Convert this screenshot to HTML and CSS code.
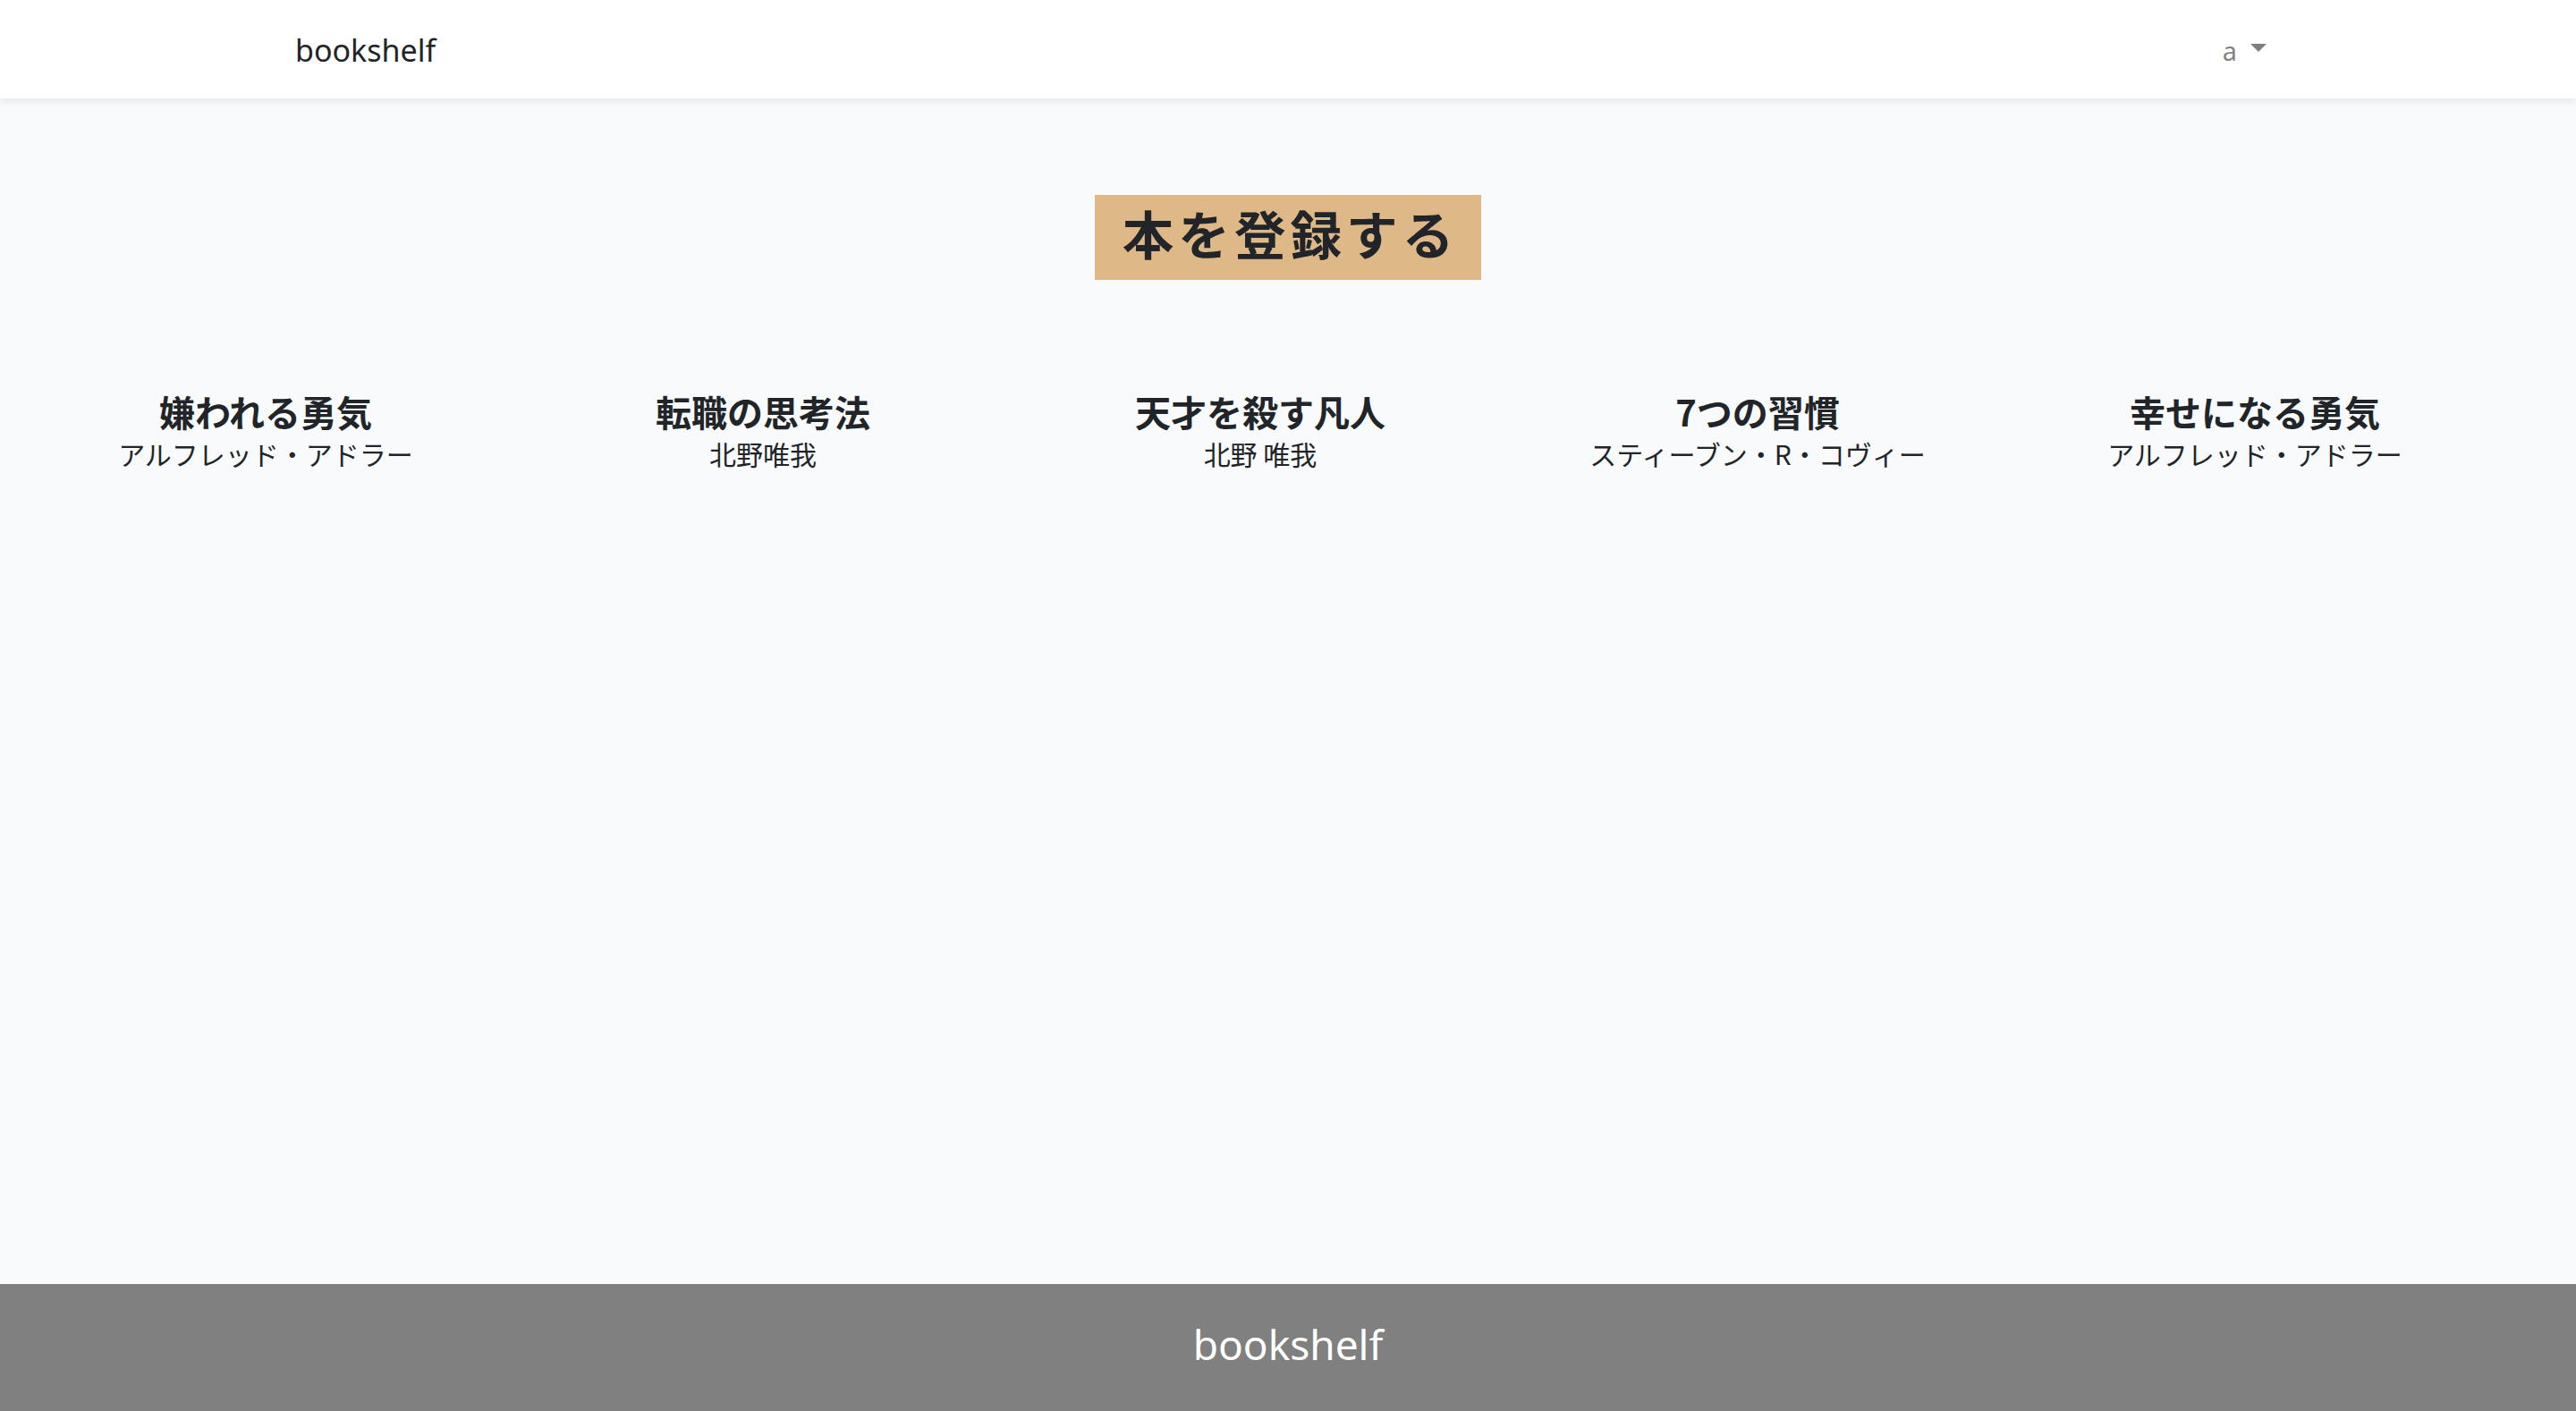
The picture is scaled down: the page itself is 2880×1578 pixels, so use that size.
FILE: index.html
```html
<!DOCTYPE html>
<html lang="ja">
<head>
<meta charset="utf-8">
<title>bookshelf</title>
<link rel="stylesheet" href="styles.css">
</head>
<body>
<div class="app">
  <nav class="navbar">
    <div class="container nav-inner">
      <a class="brand" href="#">bookshelf</a>
      <a class="user-toggle" href="#">a<span class="caret"></span></a>
    </div>
  </nav>
  <main class="main">
    <div class="register-wrap">
      <a class="register" href="#">本を登録する</a>
    </div>
    <div class="books">
      <div class="book">
        <h5 class="book-title">嫌われる勇気</h5>
        <p class="book-author">アルフレッド・アドラー</p>
      </div>
      <div class="book">
        <h5 class="book-title">転職の思考法</h5>
        <p class="book-author">北野唯我</p>
      </div>
      <div class="book">
        <h5 class="book-title">天才を殺す凡人</h5>
        <p class="book-author">北野 唯我</p>
      </div>
      <div class="book">
        <h5 class="book-title">7つの習慣</h5>
        <p class="book-author">スティーブン・R・コヴィー</p>
      </div>
      <div class="book">
        <h5 class="book-title">幸せになる勇気</h5>
        <p class="book-author">アルフレッド・アドラー</p>
      </div>
    </div>
  </main>
  <footer class="footer">
    <span class="footer-brand">bookshelf</span>
  </footer>
</div>
</body>
</html>
```

FILE: styles.css
```css
* { box-sizing: border-box; }
html, body { margin: 0; padding: 0; }
body {
  background: #f8fafc;
  color: #212529;
  font-family: "Noto Sans", "Noto Sans CJK JP", sans-serif;
  font-size: 28.8px;
  line-height: 1.6;
}
a { text-decoration: none; color: inherit; }
.app {
  display: flex;
  flex-direction: column;
  min-height: 100vh;
}
.navbar {
  background: #fff;
  height: 110px;
  box-shadow: 0 4px 8px rgba(0,0,0,0.075);
  position: relative;
  z-index: 1;
}
.container {
  width: 2220px;
  margin: 0 auto;
  height: 100%;
}
.nav-inner {
  display: flex;
  align-items: center;
  justify-content: space-between;
}
.brand {
  font-size: 34px;
  color: #212529;
  padding-top: 2px;
}
.user-toggle {
  color: rgba(0,0,0,0.5);
  font-size: 28.8px;
  padding: 4px 16px 0;
  display: flex;
  align-items: center;
}
.caret {
  display: inline-block;
  width: 0;
  height: 0;
  margin-left: 15px;
  border-top: 9px solid rgba(0,0,0,0.5);
  border-left: 9px solid transparent;
  border-right: 9px solid transparent;
  margin-top: -8px;
}
.main {
  flex: 1;
  padding-top: 108px;
}
.register-wrap {
  display: flex;
  justify-content: center;
}
.register {
  background: #deb887;
  color: #212529;
  font-family: "Noto Sans CJK JP", sans-serif;
  font-weight: 700;
  font-size: 57.6px;
  letter-spacing: 5px;
  width: 432px;
  height: 95px;
  display: flex;
  align-items: center;
  justify-content: center;
  padding: 0 0 10px 5px;
}
.books {
  display: flex;
  padding-left: 19px;
  margin-top: 122px;
}
.book {
  width: 556px;
  text-align: center;
}
.book-title {
  margin: 0;
  font-family: "Noto Sans CJK JP", sans-serif;
  font-weight: 700;
  font-size: 40px;
  line-height: 1.25;
}
.book-author {
  margin: 0;
  font-family: "Noto Sans CJK JP", sans-serif;
  font-size: 30px;
  line-height: 1.5;
}
.footer {
  background: #808080;
  height: 142px;
  display: flex;
  align-items: center;
  justify-content: center;
  flex-shrink: 0;
}
.footer-brand {
  color: #fff;
  font-size: 46px;
  padding-bottom: 6px;
}
```
